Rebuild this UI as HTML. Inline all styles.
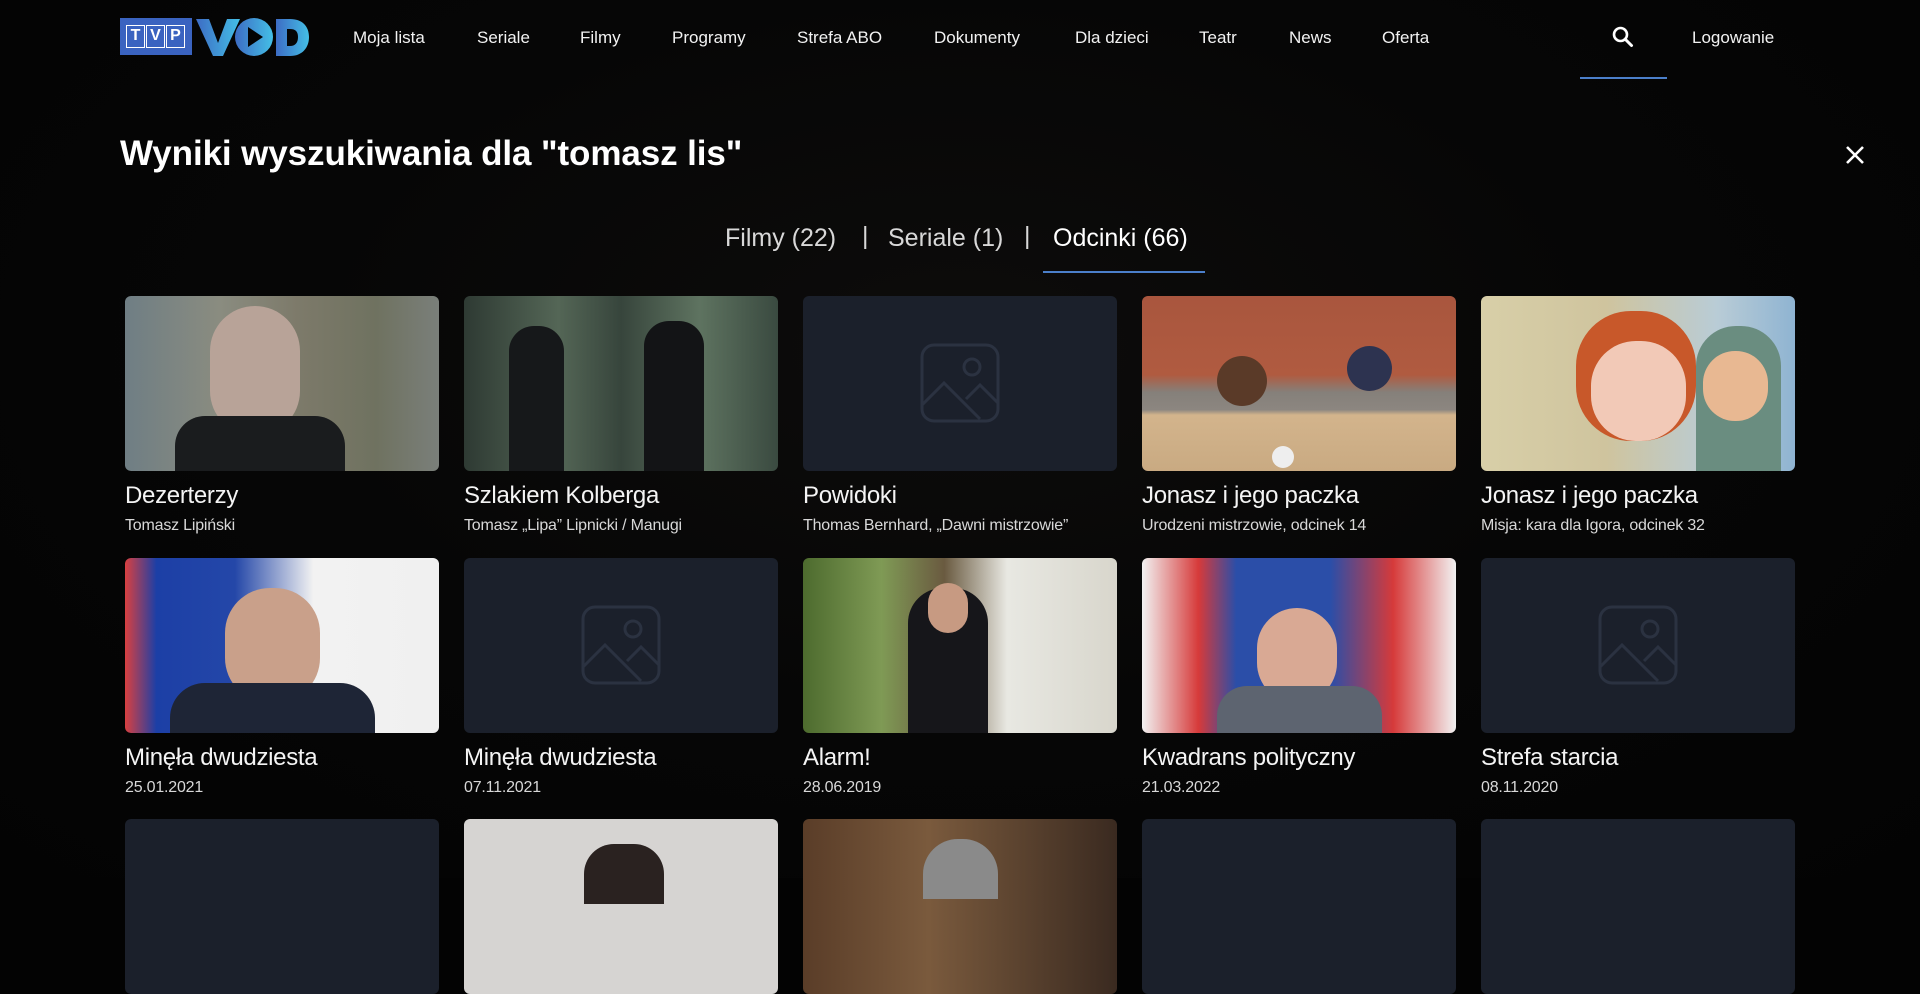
<!DOCTYPE html>
<html><head><meta charset="utf-8"><style>
*{margin:0;padding:0;box-sizing:border-box}
body{width:1920px;height:878px;overflow:hidden;background:#030303;font-family:"Liberation Sans",sans-serif;color:#fff;position:relative}
.bg{position:absolute;left:0;top:0;width:1920px;height:878px;background:radial-gradient(ellipse at 50% 40%,#0d0c0b 0%,#060606 50%,#030303 100%)}
.abs{position:absolute;white-space:nowrap}
.nav{font-size:17px;top:28px;color:#f2f2f2}
.card{position:absolute;width:314px}
.img{width:314px;height:175px;border-radius:6px;overflow:hidden;position:relative}
.ph{background:#1b202b}
.ph svg{position:absolute;left:117px;top:47px}
.t{font-size:24px;margin-top:11px;letter-spacing:-0.3px;color:#f4f4f4}
.s{font-size:16px;margin-top:7px;color:#d8d8d8;letter-spacing:-0.2px}
.lt{position:absolute;top:25px;width:19px;height:23px;border:1.5px solid #fff;font-size:16px;font-weight:bold;color:#fff;text-align:center;line-height:20px}
</style></head><body>
<div class="bg"></div>
<div class="abs" style="left:120px;top:18px;width:72px;height:37px;background:#3a63c0"></div>
<div class="lt" style="left:126px">T</div><div class="lt" style="left:146px">V</div><div class="lt" style="left:166px">P</div>
<svg class="abs" style="left:196px;top:16px" width="114" height="42" viewBox="0 0 114 42">
<defs><linearGradient id="g" x1="0" x2="1"><stop offset="0" stop-color="#3d6cc4"/><stop offset="1" stop-color="#44bfe6"/></linearGradient></defs>
<path d="M0 3h13l9 24 9-24h13l-17 37h-10z" fill="url(#g)"/>
<circle cx="58" cy="21" r="19" fill="url(#g)"/><path d="M52 11l15 10-15 10z" fill="#030303"/>
<path d="M80 3h14c12 0 19 7 19 18s-7 19-19 19h-14zM91 13v17h3c5 0 8-3 8-9s-3-8-8-8z" fill="url(#g)"/>
</svg>
<div class="abs nav" style="left:353px">Moja lista</div>
<div class="abs nav" style="left:477px">Seriale</div>
<div class="abs nav" style="left:580px">Filmy</div>
<div class="abs nav" style="left:672px">Programy</div>
<div class="abs nav" style="left:797px">Strefa ABO</div>
<div class="abs nav" style="left:934px">Dokumenty</div>
<div class="abs nav" style="left:1075px">Dla dzieci</div>
<div class="abs nav" style="left:1199px">Teatr</div>
<div class="abs nav" style="left:1289px">News</div>
<div class="abs nav" style="left:1382px">Oferta</div>
<svg class="abs" style="left:1612px;top:26px" width="22" height="22" viewBox="0 0 22 22"><circle cx="8.5" cy="8.5" r="6.5" stroke="#fff" stroke-width="2.6" fill="none"/><path d="M13.5 13.5l6 6" stroke="#fff" stroke-width="3" stroke-linecap="round"/></svg>
<div class="abs nav" style="left:1692px">Logowanie</div>
<div class="abs" style="left:1580px;top:77px;width:87px;height:2px;background:#4b7fca"></div>
<div class="abs" style="left:120px;top:134px;font-size:35px;font-weight:bold;letter-spacing:-0.1px">Wyniki wyszukiwania dla "tomasz lis"</div>
<svg class="abs" style="left:1845px;top:145px" width="20" height="20" viewBox="0 0 20 20"><path d="M2 2l16 16M18 2L2 18" stroke="#fff" stroke-width="2.6"/></svg>
<div class="abs" style="left:725px;top:224px;font-size:25px;color:#d8d8d8">Filmy (22)</div>
<div class="abs" style="left:862px;top:222px;font-size:25px;color:#d8d8d8">|</div>
<div class="abs" style="left:888px;top:224px;font-size:25px;color:#d8d8d8">Seriale (1)</div>
<div class="abs" style="left:1024px;top:222px;font-size:25px;color:#d8d8d8">|</div>
<div class="abs" style="left:1053px;top:224px;font-size:25px;color:#fff">Odcinki (66)</div>
<div class="abs" style="left:1043px;top:271px;width:162px;height:2px;background:#4b7fca"></div>

<div class="card" style="left:125px;top:296px"><div class="img" style="background:linear-gradient(90deg,#6f7e84 0%,#8a8c80 30%,#7d7a6a 55%,#6f7260 80%,#7a7f7a 100%)"><div style="position:absolute;left:85px;top:10px;width:90px;height:130px;border-radius:45px;background:#b8a398"></div><div style="position:absolute;left:50px;top:120px;width:170px;height:60px;border-radius:30px 30px 0 0;background:#1a1c1e"></div></div><div class="t">Dezerterzy</div><div class="s">Tomasz Lipiński</div></div>
<div class="card" style="left:464px;top:296px"><div class="img" style="background:linear-gradient(90deg,#2e3a33,#546656 30%,#37453c 50%,#5e7360 75%,#3a4a40)"><div style="position:absolute;left:45px;top:30px;width:55px;height:145px;border-radius:25px 25px 0 0;background:#16181a"></div><div style="position:absolute;left:180px;top:25px;width:60px;height:150px;border-radius:25px 25px 0 0;background:#131416"></div></div><div class="t">Szlakiem Kolberga</div><div class="s">Tomasz „Lipa” Lipnicki / Manugi</div></div>
<div class="card" style="left:803px;top:296px"><div class="img ph"><svg width="80" height="80" viewBox="0 0 80 80" fill="none" stroke="#2b3241" stroke-width="3"><rect x="2" y="2" width="76" height="76" rx="12"/><circle cx="52" cy="24" r="8"/><path d="M2 62l22-22 36 36M46 56l14-14 18 18"/></svg></div><div class="t">Powidoki</div><div class="s">Thomas Bernhard, „Dawni mistrzowie”</div></div>
<div class="card" style="left:1142px;top:296px"><div class="img" style="background:linear-gradient(180deg,#a9563e 0%,#b05b40 45%,#85807a 55%,#8c8680 65%,#d3b48c 68%,#c9aa82 100%)"><div style="position:absolute;left:75px;top:60px;width:50px;height:50px;border-radius:50%;background:#5a3a28"></div><div style="position:absolute;left:205px;top:50px;width:45px;height:45px;border-radius:50%;background:#2d3350"></div><div style="position:absolute;left:130px;top:150px;width:22px;height:22px;border-radius:50%;background:#eee"></div></div><div class="t">Jonasz i jego paczka</div><div class="s">Urodzeni mistrzowie, odcinek 14</div></div>
<div class="card" style="left:1481px;top:296px"><div class="img" style="background:linear-gradient(90deg,#d8cfa8 0%,#cfc49e 40%,#b9ccd6 75%,#8fb4d2 100%)"><div style="position:absolute;left:95px;top:15px;width:120px;height:130px;border-radius:55px;background:#c8582a"></div><div style="position:absolute;left:110px;top:45px;width:95px;height:100px;border-radius:45px;background:#f2c9b7"></div><div style="position:absolute;left:215px;top:30px;width:85px;height:145px;border-radius:40px 40px 0 0;background:#6a8d80"></div><div style="position:absolute;left:222px;top:55px;width:65px;height:70px;border-radius:32px;background:#e8b892"></div></div><div class="t">Jonasz i jego paczka</div><div class="s">Misja: kara dla Igora, odcinek 32</div></div>

<div class="card" style="left:125px;top:558px"><div class="img" style="background:linear-gradient(90deg,#d94040 0%,#1c3fa6 10%,#2447a8 35%,#f2f2f2 60%,#f0f0f0 100%)"><div style="position:absolute;left:100px;top:30px;width:95px;height:115px;border-radius:45px;background:#c9a08a"></div><div style="position:absolute;left:45px;top:125px;width:205px;height:50px;border-radius:35px 35px 0 0;background:#1e2536"></div></div><div class="t">Minęła dwudziesta</div><div class="s">25.01.2021</div></div>
<div class="card" style="left:464px;top:558px"><div class="img ph"><svg width="80" height="80" viewBox="0 0 80 80" fill="none" stroke="#2b3241" stroke-width="3"><rect x="2" y="2" width="76" height="76" rx="12"/><circle cx="52" cy="24" r="8"/><path d="M2 62l22-22 36 36M46 56l14-14 18 18"/></svg></div><div class="t">Minęła dwudziesta</div><div class="s">07.11.2021</div></div>
<div class="card" style="left:803px;top:558px"><div class="img" style="background:linear-gradient(90deg,#4d6b2e 0%,#7f9a55 25%,#6a5a40 45%,#e8e8e2 65%,#d8d6cc 100%)"><div style="position:absolute;left:105px;top:30px;width:80px;height:145px;border-radius:35px 35px 0 0;background:#16161a"></div><div style="position:absolute;left:125px;top:25px;width:40px;height:50px;border-radius:20px;background:#c79a82"></div></div><div class="t">Alarm!</div><div class="s">28.06.2019</div></div>
<div class="card" style="left:1142px;top:558px"><div class="img" style="background:linear-gradient(90deg,#f2f2f2 0%,#d63a3a 18%,#2b4ea8 30%,#2b4ea8 60%,#d63a3a 80%,#f2f2f2 100%)"><div style="position:absolute;left:115px;top:50px;width:80px;height:95px;border-radius:40px;background:#d9a994"></div><div style="position:absolute;left:75px;top:128px;width:165px;height:50px;border-radius:30px 30px 0 0;background:#5d6470"></div></div><div class="t">Kwadrans polityczny</div><div class="s">21.03.2022</div></div>
<div class="card" style="left:1481px;top:558px"><div class="img ph"><svg width="80" height="80" viewBox="0 0 80 80" fill="none" stroke="#2b3241" stroke-width="3"><rect x="2" y="2" width="76" height="76" rx="12"/><circle cx="52" cy="24" r="8"/><path d="M2 62l22-22 36 36M46 56l14-14 18 18"/></svg></div><div class="t">Strefa starcia</div><div class="s">08.11.2020</div></div>

<div class="card" style="left:125px;top:819px"><div class="img ph"></div></div>
<div class="card" style="left:464px;top:819px"><div class="img" style="background:#d6d4d2"><div style="position:absolute;left:120px;top:25px;width:80px;height:60px;border-radius:30px 30px 0 0;background:#2a2220"></div></div></div>
<div class="card" style="left:803px;top:819px"><div class="img" style="background:linear-gradient(90deg,#5a3d28,#7a5a3d 40%,#3a2a20)"><div style="position:absolute;left:120px;top:20px;width:75px;height:60px;border-radius:35px 35px 0 0;background:#8a8a8a"></div></div></div>
<div class="card" style="left:1142px;top:819px"><div class="img ph"></div></div>
<div class="card" style="left:1481px;top:819px"><div class="img ph"></div></div>
</body></html>
